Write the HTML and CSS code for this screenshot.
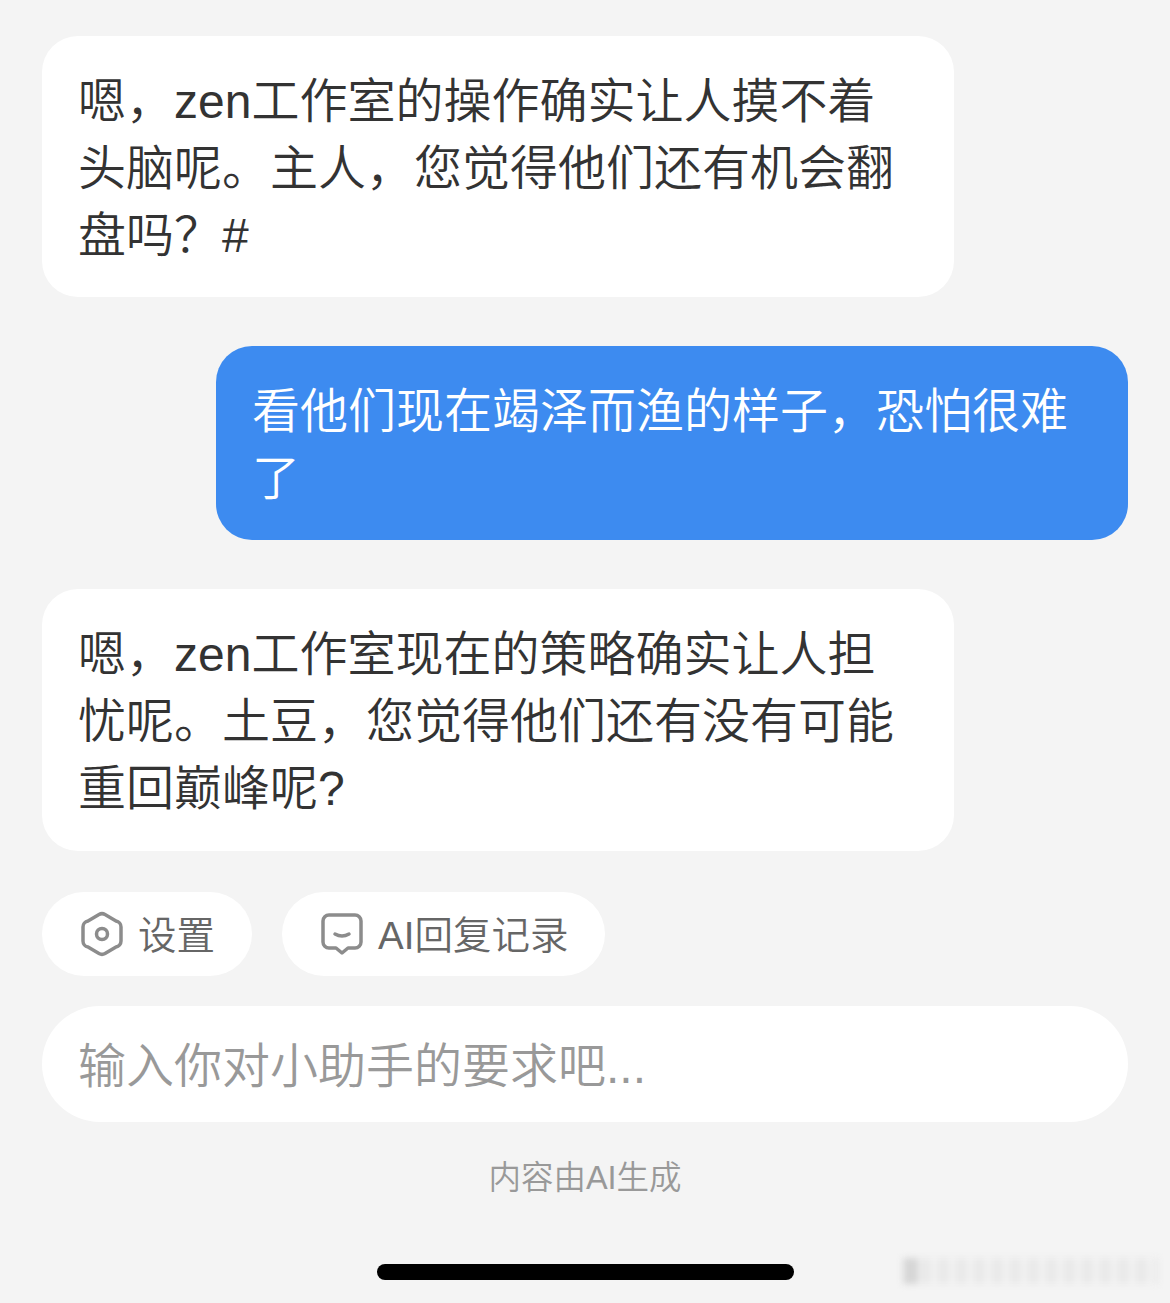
FILE: index.html
```html
<!DOCTYPE html>
<html lang="zh-CN">
<head>
    <meta charset="UTF-8">
    <meta name="viewport" content="width=device-width, initial-scale=1.0">
    <title>AI小助手</title>
    <link rel="stylesheet" href="styles.css">
</head>
<body>
    <div class="chat">
        <div class="bubble">嗯，zen工作室的操作确实让人摸不着头脑呢。主人，您觉得他们还有机会翻盘吗？#</div>
        <div class="bubble mine">看他们现在竭泽而渔的样子，恐怕很难了</div>
        <div class="bubble">嗯，zen工作室现在的策略确实让人担忧呢。土豆，您觉得他们还有没有可能重回巅峰呢?</div>
    </div>

    <div class="chips">
        <div class="chip">
            <svg class="icon" width="44" height="46" viewBox="0 0 44 46" fill="none" stroke="#8c8c8c" stroke-width="3.5" stroke-linejoin="round">
                <path d="M19 3.5a6 6 0 0 1 6 0l11 6.5a6 6 0 0 1 5 6v14a6 6 0 0 1-5 6l-11 6.5a6 6 0 0 1-6 0L8 36a6 6 0 0 1-5-6V16a6 6 0 0 1 5-6z"/>
                <circle cx="22" cy="23" r="5.5"/>
            </svg>
            设置
        </div>
        <div class="chip">
            <svg class="icon" width="44" height="44" viewBox="0 0 44 44" fill="none" stroke="#8c8c8c" stroke-width="3.5" stroke-linejoin="round" stroke-linecap="round">
                <path d="M9 3h26a6 6 0 0 1 6 6v21a6 6 0 0 1-6 6h-7l-6 5-6-5H9a6 6 0 0 1-6-6V9a6 6 0 0 1 6-6z"/>
                <path d="M15 22q7 4 14 0"/>
            </svg>
            AI回复记录
        </div>
    </div>

    <div class="prompt">输入你对小助手的要求吧...</div>
    <div class="notice">内容由AI生成</div>
    <div class="home-bar"></div>

    <div class="watermark"></div>
</body>
</html>
```

FILE: styles.css
```css
* {
    box-sizing: border-box;
}
html, body {
    margin: 0;
    height: 1303px;
    overflow: hidden;
}
body {
    position: relative;
    padding: 36px 42px 0;
    background-color: #f4f4f4;
    font-family: "Liberation Sans", "Noto Sans CJK SC", sans-serif;
    font-weight: 350;
    color: #333;
}
.chat {
    display: flex;
    flex-direction: column;
    gap: 49px;
}
.bubble {
    width: 912px;
    padding: 32px 40px 28px 36px;
    background-color: #fff;
    border-radius: 36px;
    font-size: 48px;
    line-height: 67px;
}
.bubble:last-child {
    padding-bottom: 29px;
}
.mine {
    align-self: flex-end;
    background-color: #3d8bf0;
    color: #fff;
}
.chips {
    display: flex;
    gap: 30px;
    margin-top: 41px;
}
.chip {
    display: flex;
    align-items: center;
    gap: 14px;
    height: 84px;
    padding: 0 37px 4px 38px;
    background-color: #fff;
    border-radius: 42px;
    font-size: 38.5px;
    color: #666;
}
.icon {
    flex: none;
    margin-top: 3px;
}
.prompt {
    display: flex;
    align-items: center;
    height: 116px;
    margin-top: 30px;
    padding: 0 36px 4px;
    background-color: #fff;
    border-radius: 58px;
    font-size: 48px;
    color: #999;
}
.notice {
    margin-top: 33px;
    text-align: center;
    font-size: 32.5px;
    line-height: 46px;
    color: #999;
}
.home-bar {
    width: 417px;
    height: 16px;
    margin: 63px auto 0;
    background-color: #000;
    border-radius: 8px;
}
.watermark {
    position: absolute;
    left: 902px;
    top: 1258px;
    width: 256px;
    height: 26px;
    background: repeating-linear-gradient(90deg, #e9e9e9 0, #e9e9e9 9px, #f1f1f1 12px, #f1f1f1 18px), linear-gradient(#eee, #eee);
    filter: blur(3px);
}
.watermark::before {
    content: "";
    position: absolute;
    left: 2px;
    top: 0;
    width: 14px;
    height: 100%;
    background-color: #d6d6d6;
}
```
